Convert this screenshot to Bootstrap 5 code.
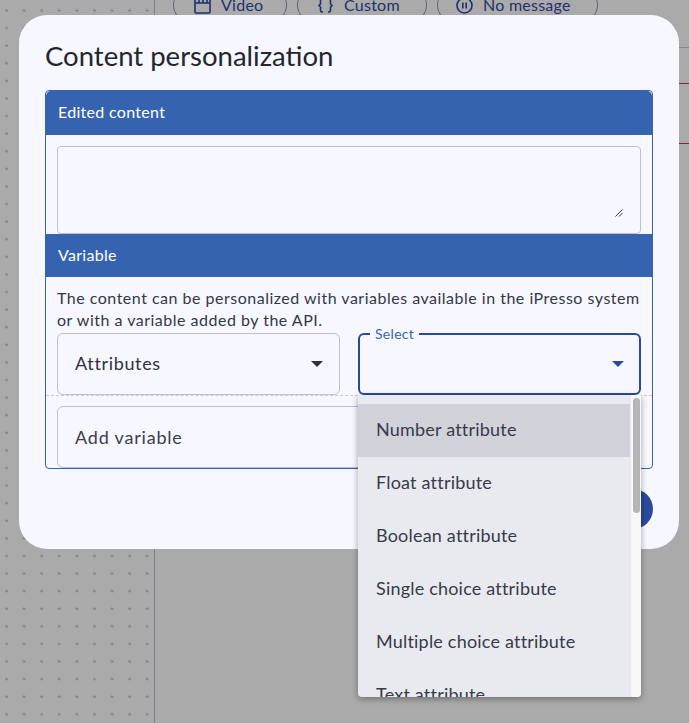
<!DOCTYPE html>
<html lang="en">
<head>
<meta charset="utf-8">
<title>Content personalization</title>
<link rel="stylesheet" href="https://cdn.jsdelivr.net/npm/bootstrap@5.3.0/dist/css/bootstrap.min.css">
<style>
html,body{height:723px;overflow:hidden;}
body{background:#aaaaaa;font-family:"Lato","Noto Sans","Liberation Sans",sans-serif;color:#2d3142;position:relative;}
.canvas-wrap{height:723px;}
.dot-side{width:155px;flex:none;border-right:1px solid #7f7f96;
 background-image:radial-gradient(circle at 6.5px 10.5px,#85859a 1.2px,transparent 1.4px);background-size:17.6px 17.6px;}
.main-side{min-width:0;position:relative;}
.wire{position:absolute;left:350px;right:0;height:1px;}
.wire-grey{top:47px;background:#85859a;}
.wire-red-a{top:83px;background:#7a2a2a;}
.wire-red-b{top:143px;background:#7a2a2a;}
.pill-row{gap:10px;margin-left:18px;margin-top:-13px;}
.ghost-pill{height:36px;border:1px solid #5d6478;border-radius:18px;color:#1f3070;font-size:16px;letter-spacing:.25px;display:flex;align-items:center;justify-content:flex-start;}
.ghost-pill svg{flex:none;margin-right:10px;}
.pill-a{width:114px;padding-left:20px;}
.pill-b{width:130px;padding-left:19px;}
.pill-c{width:161px;padding-left:18px;}
.dialog-box{position:absolute;left:19px;top:15px;width:660px;height:534px;background:#f7f8ff;border-radius:28px;padding:22px 26px 0;}
.dialog-title{font-size:27.500px;line-height:38px;font-weight:400;color:#23262f;margin:0 0 15px;}
.panel{border:1px solid #3563b0;border-radius:4px;background:transparent;height:379px;}
.panel-head{background:#3563b0;color:#fff;font-size:16px;letter-spacing:.3px;border:0;border-radius:0;padding:0 12px;display:flex;align-items:center;}
.head-one{height:44px;border-radius:3px 3px 0 0;padding-bottom:2px;}
.head-two{height:44px;}
.panel-pad{padding:11px 11px 0;position:relative;}
.area{height:88px;background:#f7f8ff;border:1px solid #bcc0d4;border-radius:4px;display:block;resize:none;}
.area:focus{background:#f7f8ff;}
.grip{position:absolute;right:29px;bottom:17px;}
.info-text{font-size:16px;line-height:22px;letter-spacing:.5px;color:#343745;padding:10px 11px 0;margin:0;}
.field-row{padding:0 11px;gap:18px;margin-top:2px;}
.field{height:62px;width:283px;flex:none;position:relative;border:1px solid #bcc0d4;border-radius:6px;display:flex;align-items:center;padding:0 17px;font-size:18px;letter-spacing:.65px;color:#2d3142;}
.field-top{padding-bottom:2px;}
.field-focus{border:2px solid #2a4b9b;padding:0 16px;}
.caret-a{position:absolute;right:16px;top:27px;width:0;height:0;border-left:6px solid transparent;border-right:6px solid transparent;border-top:6px solid #2d3142;}
.caret-b{position:absolute;right:15px;top:26px;width:0;height:0;border-left:6px solid transparent;border-right:6px solid transparent;border-top:6px solid #2a4b9b;}
.float-label{position:absolute;left:10px;top:-8px;font-size:14px;line-height:14px;letter-spacing:.3px;background:#f7f8ff;padding:0 5px;color:#3c62b4;}
.dash-line{border-top:1px dashed #c9cbd8;height:0;}
.field-add{margin:10px 11px 0;width:auto;color:#3a3e4e;letter-spacing:.8px;}
.fab{position:absolute;left:594px;top:474px;width:40px;height:40px;border-radius:50%;background:#2a4b9b;}
.drop-menu{position:absolute;left:358px;top:395px;width:283px;height:302px;background:#e9eaf0;border-radius:0 0 4px 4px;box-shadow:0 2px 6px rgba(0,0,0,.35);overflow:hidden;padding-top:9px;}
.drop-menu .list-group{width:272px;}
.drop-menu .list-group-item{background:transparent;border:0;border-radius:0;height:53px;padding:0 18px 2px;display:flex;align-items:center;font-size:18px;letter-spacing:.2px;color:#383b4a;}
.drop-menu .list-group-item.is-hover{background:#d1d2da;}
.track{position:absolute;right:0;top:0;bottom:0;width:10px;background:#f8f8f8;}
.thumb{position:absolute;right:1px;top:3px;width:7px;height:115px;border-radius:4px;background:#b5b5b8;}
</style>
</head>
<body>
<div class="canvas-wrap d-flex">
  <div class="dot-side"></div>
  <div class="main-side flex-grow-1">
    <div class="wire wire-grey"></div>
    <div class="wire wire-red-a"></div>
    <div class="wire wire-red-b"></div>
    <div class="d-flex pill-row">
      <div class="ghost-pill pill-a"><svg width="17" height="17" viewBox="0 0 17 17" fill="none" stroke="#1f3070" stroke-width="1.6"><rect x="1" y="2" width="15" height="14" rx="1"/><path d="M1 6h15M5 2v4M9 2v4M13 2v4"/></svg>Video</div>
      <div class="ghost-pill pill-b"><svg width="17" height="17" viewBox="0 0 17 17" fill="none" stroke="#1f3070" stroke-width="1.6"><path d="M6 2H5a1.500 1.500 0 0 0-1.500 1.500V7L2 8.500 3.500 10v3.500A1.500 1.500 0 0 0 5 15h1M11 2h1a1.500 1.500 0 0 1 1.500 1.500V7L15 8.500 13.500 10v3.500A1.500 1.500 0 0 1 12 15h-1"/></svg>Custom</div>
      <div class="ghost-pill pill-c"><svg width="17" height="17" viewBox="0 0 17 17" fill="none" stroke="#1f3070" stroke-width="1.6"><circle cx="8.500" cy="8.500" r="7.500"/><path d="M6.800 5.500v6M10.200 5.500v6"/></svg>No message</div>
    </div>
  </div>
</div>

<div class="dialog-box">
  <h1 class="dialog-title">Content personalization</h1>
  <div class="card panel">
    <div class="card-header panel-head head-one">Edited content</div>
    <div class="panel-pad"><textarea class="form-control area" aria-label="Edited content"></textarea>
      <svg class="grip" width="8" height="8" viewBox="0 0 8 8" fill="none" stroke="#3a3a3a" stroke-width="1"><path d="M0.500 7.500L7.500 0.500M4 7.500L7.500 4"/></svg>
    </div>
    <div class="card-header panel-head head-two">Variable</div>
    <p class="info-text">The content can be personalized with variables available in the iPresso system or with a variable added by the API.</p>
    <div class="d-flex field-row">
      <div class="field field-top">Attributes<span class="caret-a"></span></div>
      <div class="field field-focus"><span class="float-label">Select</span><span class="caret-b"></span></div>
    </div>
    <div class="dash-line"></div>
    <div class="field field-add">Add variable</div>
  </div>
  <div class="fab"></div>
</div>

<div class="drop-menu">
  <div class="list-group">
    <div class="list-group-item is-hover">Number attribute</div>
    <div class="list-group-item">Float attribute</div>
    <div class="list-group-item">Boolean attribute</div>
    <div class="list-group-item">Single choice attribute</div>
    <div class="list-group-item">Multiple choice attribute</div>
    <div class="list-group-item">Text attribute</div>
  </div>
  <div class="track"><div class="thumb"></div></div>
</div>
<script src="https://cdn.jsdelivr.net/npm/bootstrap@5.3.0/dist/js/bootstrap.bundle.min.js"></script>
</body>
</html>
